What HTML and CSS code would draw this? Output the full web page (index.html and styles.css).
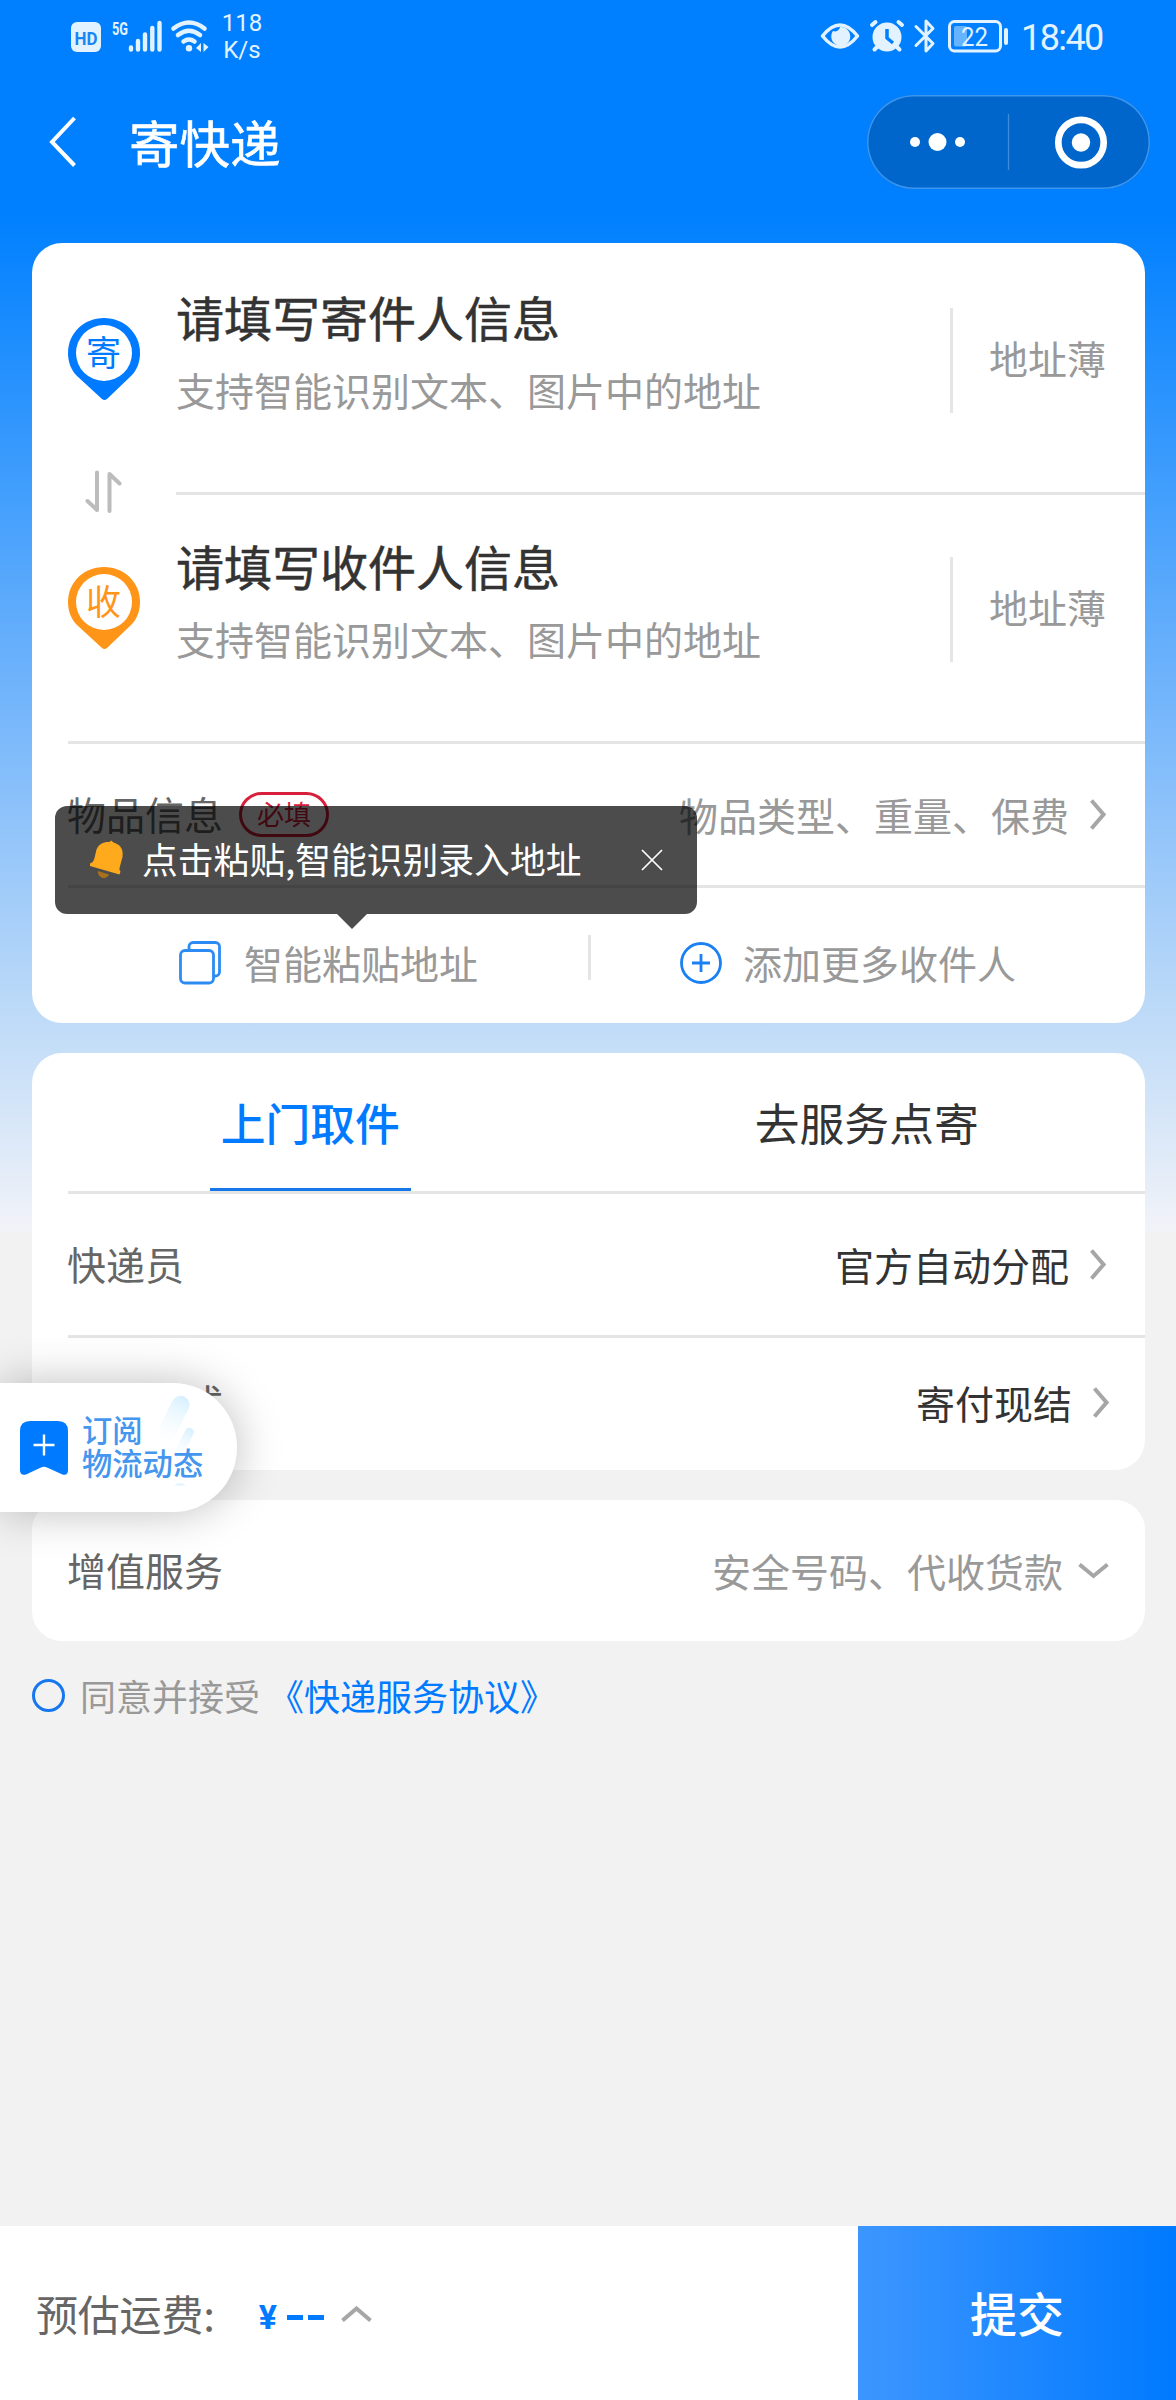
FILE: index.html
```html
<!DOCTYPE html>
<html lang="zh-CN">
<head>
<meta charset="utf-8">
<title>寄快递</title>
<link rel="stylesheet" href="styles.css">
</head>
<body>
<div class="page">
  <header class="status">
    <svg class="status-left" width="150" height="60" viewBox="66 0 150 60" fill="#e3f2ff">
      <rect x="71" y="22" width="30" height="30" rx="6"/>
      <text class="hd" x="86" y="44.5" text-anchor="middle" textLength="23" lengthAdjust="spacingAndGlyphs">HD</text>
      <text class="gen" x="112" y="34.5" textLength="16" lengthAdjust="spacingAndGlyphs">5G</text>
      <g stroke="#e3f2ff" stroke-width="4.4" stroke-linecap="round">
        <path d="M131 47.500v2M138 41v8.500M145 34.500v15M152.300 28v21.500M159.500 23v26.500"/>
      </g>
      <g fill="none" stroke="#e3f2ff" stroke-width="4.600" stroke-linecap="round">
        <path d="M173.500 28.500Q189 16.500 204.500 28.500M178 35Q189 26.500 200 35M183.500 41.500Q189 37.500 194.500 41.500"/>
      </g>
      <circle cx="189" cy="48.300" r="3.200"/>
      <path d="M201 43v9l-5-4zM203.500 43l5 4-5 5z"/>
    </svg>
    <div class="speed"><span>118</span><span>K/s</span></div>
    <svg class="status-right" width="196" height="60" viewBox="816 0 196 60" fill="none" stroke="#e3f2ff">
      <path d="M822.500 36Q840 14 857.500 36Q840 58 822.500 36Z" stroke-width="3.500" stroke-linejoin="round"/>
      <path d="M833 31a9.500 9.500 0 1 0 7-4a5 5 0 0 1-7 4z" fill="#e3f2ff" stroke="none"/>
      <circle cx="887" cy="37" r="14.500" fill="#e3f2ff" stroke="none"/>
      <path d="M872 25l3.500-3M902 25l-3.500-3M877 47l-2.500 2.500M897 47l2.500 2.500" stroke-width="4" stroke-linecap="round"/>
      <path d="M887 29v9l6 5" stroke="#0080ff" stroke-width="3.500"/>
      <path d="M916 26.500l17 17-7 7.500V21l7 7.500-17 17" stroke-width="3" stroke-linejoin="round" stroke-linecap="round"/>
      <rect x="949.500" y="21.500" width="51" height="29.500" rx="5" stroke-width="3"/>
      <rect x="954" y="26" width="13" height="20.500" rx="2" fill="#66b3ff" stroke="none"/>
      <rect x="1004" y="28" width="4" height="17" rx="2" fill="#e3f2ff" stroke="none"/>
      <text class="battery" x="974.500" y="45.500" text-anchor="middle" textLength="27" lengthAdjust="spacingAndGlyphs">22</text>
    </svg>
    <time class="clock">18:40</time>
  </header>

  <nav class="nav">
    <svg class="back" width="28" height="52" viewBox="0 0 28 52" fill="none" stroke="#fff" stroke-width="4"><path d="M25.500 2L3 26l22.500 23.500"/></svg>
    <h1 class="nav-title">寄快递</h1>
    <div class="capsule">
      <svg width="283" height="94" viewBox="867 95 283 94" fill="#fff">
        <circle cx="915" cy="142" r="5"/><circle cx="937.500" cy="142" r="9"/><circle cx="960" cy="142" r="5"/>
        <path d="M1008.500 114v56" stroke="#3d8fdd" stroke-width="1.300"/>
        <circle cx="1081" cy="142.500" r="22.700" fill="none" stroke="#fff" stroke-width="6.700"/>
        <circle cx="1081" cy="142.500" r="9.200"/>
      </svg>
    </div>
  </nav>

  <main class="main">
    <section class="card card-address">
      <div class="address">
        <svg class="pin pin-send" width="72" height="82" viewBox="0 0 72 82">
          <path d="M36 0C56 0 72 15 72 35C72 44 69 52 63 58L39 81Q36.500 83 34 81L9 58C3 52 0 44 0 35C0 15 16 0 36 0Z"/>
          <circle cx="36" cy="35" r="28" fill="#fff"/>
          <text x="35.500" y="48" text-anchor="middle">寄</text>
        </svg>
        <div class="address-body">
          <div class="address-text">
            <div class="address-title">请填写寄件人信息</div>
            <div class="address-sub">支持智能识别文本、图片中的地址</div>
          </div>
          <div class="book">地址薄</div>
        </div>
        <svg class="swap" width="38" height="44" viewBox="0 0 38 44" fill="none" stroke="#bcbcbc" stroke-width="4" stroke-linecap="round" stroke-linejoin="round"><path d="M12 2.500v37.500L2.500 31M24.500 41V4l10 9.500"/></svg>
      </div>
      <div class="address address-to">
        <svg class="pin pin-receive" width="72" height="82" viewBox="0 0 72 82">
          <path d="M36 0C56 0 72 15 72 35C72 44 69 52 63 58L39 81Q36.500 83 34 81L9 58C3 52 0 44 0 35C0 15 16 0 36 0Z"/>
          <circle cx="36" cy="35" r="28" fill="#fff"/>
          <text x="35.500" y="48" text-anchor="middle">收</text>
        </svg>
        <div class="address-body">
          <div class="address-text">
            <div class="address-title">请填写收件人信息</div>
            <div class="address-sub">支持智能识别文本、图片中的地址</div>
          </div>
          <div class="book">地址薄</div>
        </div>
      </div>
      <div class="row">
        <span class="label">物品信息</span><span class="required">必填</span>
        <span class="value muted">物品类型、重量、保费</span>
        <svg class="chev" width="16" height="31" viewBox="0 0 16 31"><path d="M1.500 1.500L13.500 15.500L1.500 29.500"/></svg>
      </div>
      <div class="actions">
        <div class="action action-paste">
          <svg width="42" height="44" viewBox="0 0 42 44" fill="none" stroke="#2c8cf4" stroke-width="2.800"><rect x="1.500" y="9.500" width="33" height="32.500" rx="4.500"/><path d="M10 9V5.500a4 4 0 0 1 4-4H36.500a4 4 0 0 1 4 4V31a4 4 0 0 1-4 4h-2"/></svg>
          <span>智能粘贴地址</span>
        </div>
        <div class="action action-add">
          <svg width="42" height="44" viewBox="0 0 42 44" fill="none" stroke="#1b80f2" stroke-width="2.800"><circle cx="21" cy="22" r="19.500"/><path d="M12 22h18M21 13v18"/></svg>
          <span>添加更多收件人</span>
        </div>
      </div>
      <div class="tip">
        <svg class="bell" width="34" height="40" viewBox="0 0 34 40"><path d="M8 31L19 34.500a5.800 5.800 0 0 1-11-3.500z" fill="#a8711c"/><path d="M21 .5L23.500 2.500C31 4.500 33.500 10 32.500 17L29.500 28Q29 30.500 30.500 31.500L29.500 34.500L0 26V23.500Q3.500 22.500 4.500 18L6.500 9.500C9 3.500 14.500 1.500 19.500 2Z" fill="#ffaa1c"/></svg>
        <span class="tip-text">点击粘贴,智能识别录入地址</span>
        <svg class="close" width="22" height="22" viewBox="0 0 22 22" stroke="#fff" stroke-width="1.700"><path d="M1 1l20 20M21 1L1 21"/></svg>
      </div>
    </section>

    <section class="card card-service">
      <div class="tabs">
        <div class="tab tab-active">上门取件</div>
        <div class="tab">去服务点寄</div>
      </div>
      <div class="row">
        <span class="label">快递员</span>
        <span class="value">官方自动分配</span>
        <svg class="chev" width="16" height="31" viewBox="0 0 16 31"><path d="M1.500 1.500L13.500 15.500L1.500 29.500"/></svg>
      </div>
      <div class="row row-pay">
        <span class="label">付款方式</span>
        <span class="value">寄付现结</span>
        <svg class="chev" width="16" height="31" viewBox="0 0 16 31"><path d="M1.500 1.500L13.500 15.500L1.500 29.500"/></svg>
      </div>
      <aside class="subscribe">
        <svg class="streaks" width="50" height="94" viewBox="0 0 50 94">
          <defs><linearGradient id="streak" x1="0" y1="0" x2="0" y2="1"><stop offset="0" stop-color="#d6f0ff"/><stop offset="1" stop-color="#fff" stop-opacity="0"/></linearGradient></defs>
          <rect x="15" y="2" width="18" height="56" rx="9" transform="rotate(27 24 10)" fill="url(#streak)"/>
          <rect x="28" y="34" width="9" height="38" rx="4.500" transform="rotate(27 33 38)" fill="url(#streak)"/>
          <path d="M17 91.500Q23 86.500 29 91.500z" fill="#dff4ff"/>
        </svg>
        <svg class="bookmark" width="48" height="54" viewBox="0 0 48 54"><path d="M10 0H38Q48 0 48 10V49Q48 55 42.500 53.500L27 46.500Q24 45 21 46.500L6 53.500Q0 55 0 49V10Q0 0 10 0Z" fill="#007aff"/><path d="M13.500 24h21M24 13.500v21" stroke="#fff" stroke-width="2.400"/></svg>
        <div class="subscribe-text">订阅<br>物流动态</div>
      </aside>
    </section>

    <section class="card card-extra">
      <div class="row row-extra">
        <span class="label">增值服务</span>
        <span class="value muted">安全号码、代收货款</span>
        <svg class="chev" width="31" height="16" viewBox="0 0 31 16"><path d="M1.500 1.500L15.500 13L29.500 1.500"/></svg>
      </div>
    </section>

    <div class="agree">
      <span class="radio"></span>
      <span class="agree-text">同意并接受</span><a class="agree-link">《快递服务协议》</a>
    </div>
  </main>

  <footer class="footer">
    <span class="fee-label">预估运费:</span>
    <span class="yen">¥</span><span class="dashes"><i></i><i></i></span>
    <svg class="chev chev-up" width="31" height="16" viewBox="0 0 31 16"><path d="M1.500 14.500L15.500 2.500L29.500 14.500"/></svg>
    <button class="submit">提交</button>
  </footer>
</div>
</body>
</html>
```
FILE: styles.css
```css
* { box-sizing: border-box; }
body { margin: 0; }
svg { display: block; flex: none; }

.page {
  width: 1176px;
  height: 2400px;
  display: flex;
  flex-direction: column;
  font-family: "Noto Sans CJK SC", sans-serif;
  color: #333;
  white-space: nowrap;
  overflow: hidden;
  background: linear-gradient(#0080ff 215px, #73b5fb 700px, #c3ddf8 1038px, #f2f3f8 1232px, #f2f2f2 1233px);
}

/* Status bar */
.status { height: 72px; display: flex; padding-left: 66px; color: #e3f2ff; font-family: Roboto, sans-serif; }
.hd { font: 700 19px Roboto, sans-serif; fill: #1a86f5; }
.gen { font: 700 19px Roboto, sans-serif; }
.battery { font: 400 26px Roboto, sans-serif; fill: #e3f2ff; stroke: none; }
.speed { width: 52px; padding-top: 10px; display: flex; flex-direction: column; align-items: center; font-size: 24px; line-height: 27px; }
.status-right { margin-left: 548px; }
.clock { margin-left: 9px; padding-top: 17px; font-size: 36px; line-height: 42px; letter-spacing: -1.6px; }

/* Title bar */
.nav { height: 171px; flex: none; display: flex; align-items: flex-start; padding: 23px 26px 0 49px; }
.back { margin-top: 21px; }
.nav-title { margin: 16px 0 0 52px; font-size: 50.5px; line-height: 60px; font-weight: 400; color: #fff; -webkit-text-stroke: .6px #fff; }
.capsule { margin-left: auto; height: 94px; border-radius: 47px; background: #0066cc; box-shadow: inset 0 0 0 1.5px #3d96ee; }

/* Cards */
.main { display: flex; flex-direction: column; gap: 30px; padding: 0 31px 0 32px; }
.card { position: relative; background: #fff; border-radius: 30px; padding-left: 36px; }

.address { position: relative; height: 249px; display: flex; }
.pin { margin-top: 75px; }
.pin text { font-size: 35px; }
.pin-send { fill: #007aff; }
.pin-receive { fill: #ff9518; }
.address-body { margin-left: 36px; flex: 1; display: flex; align-items: flex-start; border-top: 3px solid transparent; }
.address-to .address-body { border-top-color: #e5e5e5; }
.address-text { flex: 1; padding-top: 40px; }
.address-title { font-size: 48px; line-height: 60px; -webkit-text-stroke: .5px #333; }
.address-sub { margin-top: 18px; font-size: 39px; line-height: 50px; color: #999; }
.book { width: 195px; height: 105px; margin-top: 62px; padding-left: 36px; border-left: 3px solid #e5e5e5; font-size: 39px; line-height: 99px; color: #999; }
.swap { position: absolute; left: 17px; top: 227px; }

.row { height: 144px; display: flex; align-items: center; border-top: 3px solid #e5e5e5; padding-right: 39px; font-size: 39px; line-height: 50px; }
.label { margin: 0 0 3px -1px; color: #666; }
.value { margin: 0 21px 2px auto; }
.muted { color: #999; }
.chev { fill: none; stroke: #a6a6a6; stroke-width: 4; }
.required { margin-left: 16px; width: 90px; height: 45px; border: 3px solid #d8203c; border-radius: 23px; color: #d8203c; font-size: 27px; line-height: 37px; text-align: center; }

.actions { height: 138px; display: flex; border-top: 3px solid #e5e5e5; font-size: 39px; color: #999; }
.action { display: flex; align-items: center; padding-top: 15px; }
.action span { line-height: 50px; margin-bottom: 2px; }
.action-paste { width: 523px; padding-left: 111px; gap: 23px; background: linear-gradient(#e5e5e5, #e5e5e5) 520px 47px / 3px 45px no-repeat; }
.action-add { padding-left: 89px; gap: 21px; }

/* Paste hint over the goods row */
.tip { position: absolute; left: 23px; top: 563px; width: 642px; height: 108px; padding: 0 34px 0 35px; display: flex; align-items: center; border-radius: 12px; background: rgba(0, 0, 0, .7); color: #fff; }
.tip::after { content: ""; position: absolute; left: 282px; top: 108px; border: 15px solid transparent; border-top-color: rgba(0, 0, 0, .7); border-bottom: 0; }
.tip-text { margin-left: 18px; font-size: 35.8px; line-height: 50px; margin-bottom: 4px; }
.close { margin-left: auto; }

.tabs { height: 138px; margin-left: -36px; display: flex; font-size: 44.8px; line-height: 138px; }
.tab { flex: 1; display: flex; justify-content: center; }
.tab-active { color: #007aff; font-weight: 500; background: linear-gradient(#1677e8, #1677e8) 50.2% 100% / 201px 3px no-repeat; }
.row-pay { height: 135px; padding-right: 36px; padding-bottom: 3px; }
.row-extra { height: 141px; border-top: 0; padding-right: 36px; padding-bottom: 0; }
.row-extra .value { margin-right: 15px; }

/* Floating subscription pill */
.subscribe { position: absolute; z-index: 1; left: -32px; top: 330px; width: 237px; height: 129px; display: flex; padding: 38px 0 0 20px; background: #fff; border-radius: 0 64px 64px 0; box-shadow: 0 0 45px rgba(0, 0, 0, .26); }
.bookmark { position: relative; }
.subscribe-text { position: relative; margin: -8px 0 0 14px; font-size: 30.3px; line-height: 33px; color: #4596ee; font-weight: 500; }
.streaks { position: absolute; left: 157px; top: 11px; }

/* Agreement */
.agree { height: 54px; margin-top: -1px; display: flex; align-items: center; font-size: 36px; line-height: 50px; color: #999; }
.radio { width: 33px; height: 33px; margin-top: -4px; border: 3px solid #1677f0; border-radius: 50%; }
.agree-text { margin: -5px 0 0 15px; }
.agree-link { margin: -5px 0 0 8px; color: #007aff; }

/* Bottom bar */
.footer { margin-top: auto; height: 174px; display: flex; align-items: center; background: #fff; padding-left: 36px; }
.fee-label { font-size: 42px; line-height: 50px; color: #666; letter-spacing: -.2px; margin-bottom: 1px; }
.yen { margin-left: 44px; margin-top: 7px; width: 28px; font: 700 34px/40px Roboto, sans-serif; color: #007aff; }
.dashes { display: flex; gap: 5px; margin-top: 9px; }
.dashes i { width: 16px; height: 5px; background: #007aff; }
.chev-up { margin-left: 17px; margin-top: 1px; }
.submit { margin-left: auto; width: 318px; height: 174px; border: 0; padding: 0 0 2px; font: 500 47px/60px "Noto Sans CJK SC", sans-serif; color: #fff; background: linear-gradient(90deg, #3d96ff, #007aff); }
```
